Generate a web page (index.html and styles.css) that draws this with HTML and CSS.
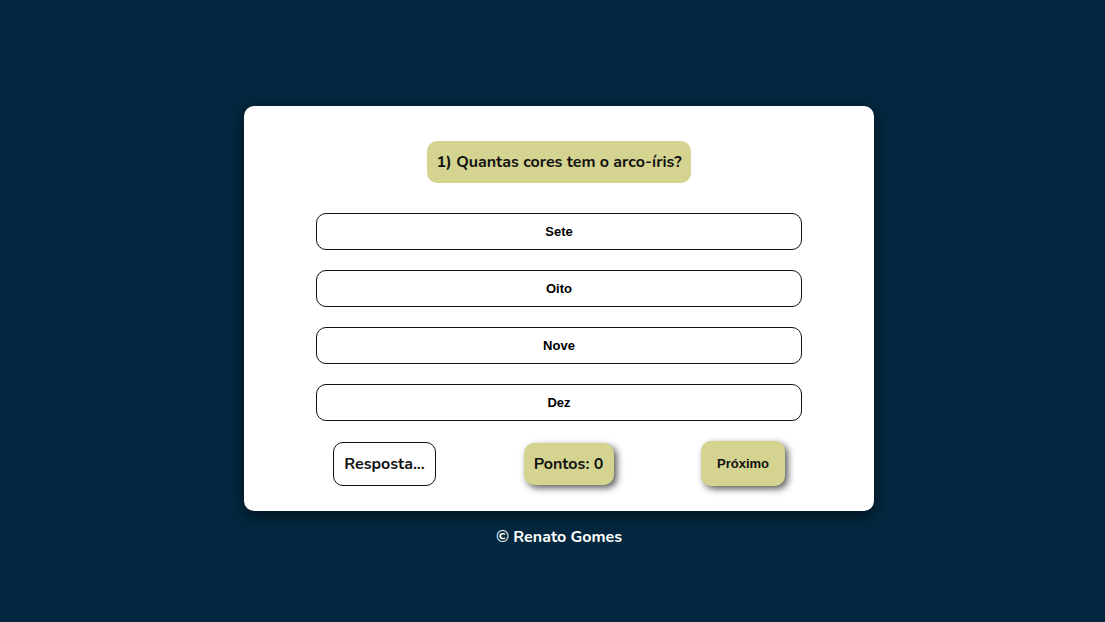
FILE: index.html
```html
<!DOCTYPE html>
<html lang="pt-BR">
<head>
<meta charset="utf-8">
<title>Quiz</title>
<link rel="stylesheet" href="styles.css">
</head>
<body>
<main class="page">
  <section class="card">
    <h1 class="question">1) Quantas cores tem o arco-íris?</h1>
    <div class="answers">
      <button class="answer">Sete</button>
      <button class="answer">Oito</button>
      <button class="answer">Nove</button>
      <button class="answer">Dez</button>
    </div>
    <div class="actions">
      <button class="reveal">Resposta...</button>
      <div class="score">Pontos: 0</div>
      <button class="next">Próximo</button>
    </div>
  </section>
  <footer class="footer">© Renato Gomes</footer>
</main>
</body>
</html>
```

FILE: styles.css
```css
* { box-sizing: border-box; }
html, body { margin: 0; padding: 0; }
body {
  background: #03283f;
  font-family: "Nunito", "Noto Sans", "Open Sans", sans-serif;
  width: 1105px;
  height: 622px;
  overflow: hidden;
}
.page {
  display: flex;
  flex-direction: column;
  align-items: center;
  padding-top: 106px;
  padding-left: 13px;
}
.card {
  width: 630px;
  height: 405px;
  background: #ffffff;
  border-radius: 10px;
  box-shadow: 0 4px 16px rgba(0, 0, 0, 0.6);
  display: flex;
  flex-direction: column;
  align-items: center;
  padding-top: 35px;
}
.question {
  margin: 0;
  background: #d4d390;
  color: #111;
  font-size: 16px;
  font-weight: 700;
  height: 42px;
  line-height: 42px;
  padding: 0 10px;
  border-radius: 10px;
}
.answers {
  margin-top: 30px;
  width: 486px;
  display: flex;
  flex-direction: column;
  gap: 20px;
}
.answer {
  height: 37px;
  background: #fff;
  border: 1px solid #111;
  border-radius: 10px;
  font-family: "Liberation Sans", Arial, sans-serif;
  font-size: 13px;
  font-weight: 700;
  color: #000;
  padding: 0;
}
.actions {
  width: 486px;
  margin-top: 20px;
  padding: 0 17px;
  display: flex;
  justify-content: space-between;
  align-items: center;
}
.reveal {
  width: 103px;
  height: 44px;
  background: #fff;
  border: 1px solid #111;
  border-radius: 10px;
  font-family: "Nunito", "Noto Sans", "Open Sans", sans-serif;
  font-size: 16px;
  font-weight: 700;
  color: #111;
  padding: 0;
}
.score {
  width: 90px;
  height: 42px;
  line-height: 42px;
  text-align: center;
  background: #d4d390;
  border-radius: 10px;
  font-size: 16px;
  font-weight: 700;
  color: #111;
  box-shadow: 3px 3px 7px rgba(0, 0, 0, 0.65);
}
.next {
  width: 84px;
  height: 45px;
  background: #d4d390;
  border: none;
  border-radius: 10px;
  font-family: "Liberation Sans", Arial, sans-serif;
  font-size: 13px;
  font-weight: 700;
  color: #111;
  box-shadow: 3px 3px 7px rgba(0, 0, 0, 0.65);
  padding: 0;
}
.footer {
  margin-top: 15px;
  color: #fff;
  font-size: 16px;
  font-weight: 700;
}
```
